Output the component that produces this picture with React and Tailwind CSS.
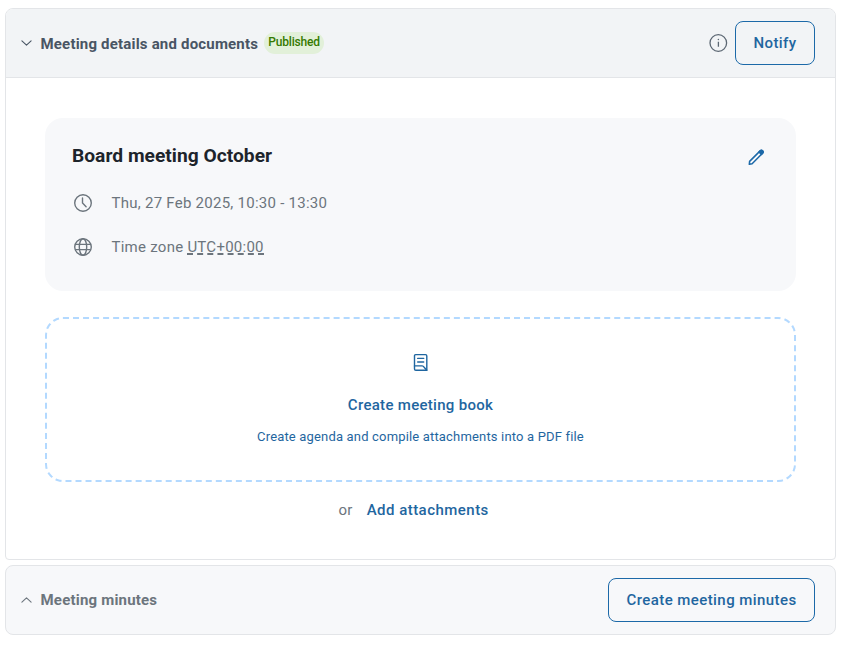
import React from "react";

function Chevron({ up = false }) {
  return (
    <svg className="h-3 w-3 shrink-0" viewBox="0 0 12 12" fill="none" stroke="currentColor" strokeWidth="1.1" strokeLinecap="round" strokeLinejoin="round">
      <path d={up ? "M1.9 8.2 6.5 3.8l4.6 4.4" : "M1.9 3.8 6.5 8.2l4.6-4.4"} />
    </svg>
  );
}

function InfoIcon() {
  return (
    <svg className="h-5 w-5" viewBox="0 0 20 20" fill="none" stroke="currentColor" strokeWidth="1.3">
      <circle cx="10.3" cy="10" r="8.3" />
      <path d="M10.4 8.8v5" />
      <circle cx="10.4" cy="6.6" r="0.75" fill="currentColor" stroke="none" />
    </svg>
  );
}

function ClockIcon() {
  return (
    <svg className="h-5 w-5" viewBox="0 0 20 20" fill="none" stroke="currentColor" strokeWidth="1.4" strokeLinecap="round">
      <circle cx="10" cy="10" r="8.3" />
      <path d="M9.5 5v5l3.6 3.8" />
    </svg>
  );
}

function GlobeIcon() {
  return (
    <svg className="h-5 w-5" viewBox="0 0 20 20" fill="none" stroke="currentColor" strokeWidth="1.4">
      <circle cx="10" cy="10" r="8.3" />
      <ellipse cx="10" cy="10" rx="3.7" ry="8.3" />
      <path d="M2.3 7.4h15.4M2.3 12.6h15.4" />
    </svg>
  );
}

function PencilIcon() {
  return (
    <svg className="h-5 w-5" viewBox="0 0 20 20" fill="none" stroke="currentColor" strokeWidth="1.5" strokeLinejoin="round">
      <path d="M3.3 17.3 3.6 14.4 14.1 3.9a1.7 1.7 0 0 1 2.4 2.4L6.1 16.8z" />
      <path d="m13 5 1.3-1.3a1.7 1.7 0 0 1 2.4 2.4l-1.3 1.3z" fill="currentColor" />
    </svg>
  );
}

function BookIcon() {
  return (
    <svg className="h-5 w-5" viewBox="0 0 20 20" fill="none" stroke="currentColor" strokeWidth="1.4" strokeLinejoin="round" strokeLinecap="round">
      <path d="M4.6 2.6h9.9a1.3 1.3 0 0 1 1.3 1.3v14.4h-11A1.3 1.3 0 0 1 3.5 17V3.7a1.1 1.1 0 0 1 1.1-1.1z" />
      <path d="M3.5 13.9h7.6c1.2 0 1.6.6 2 1.4l2.7 3M6.7 6.4h6M6.7 10h6" />
    </svg>
  );
}

function OutlineButton({ children, className }) {
  return (
    <button className={`h-11 rounded-lg border border-[#1c69a8] text-[15px] font-medium text-[#1f66a0] ${className}`}>
      {children}
    </button>
  );
}

export default function App() {
  return (
    <main className="flex h-[649px] w-[845px] flex-col gap-[5px] bg-white pt-2 pl-[5px] font-['Roboto',sans-serif] text-[15px] tracking-[0.26px] text-[#6c757d]">
      <section className="h-[552px] w-[831px] overflow-hidden rounded-lg rounded-b-[4px] border border-[#e3e5e8] bg-white">
        <header className="flex h-[69px] items-center border-b border-[#e3e5e8] bg-[#f2f4f6] pr-5 pl-[14px] text-[#495564]">
          <Chevron />
          <h2 className="ml-[8.5px] pt-[2px] text-[15px] font-bold tracking-[0.19px]">Meeting details and documents</h2>
          <span className="ml-[6px] flex h-[22px] w-[60px] items-start justify-center rounded-full bg-[#e2f0d9] pt-[2px] text-[12px] leading-4 font-medium tracking-[-0.18px] text-[#357a00]">Published</span>
          <span className="mr-[7px] ml-auto text-[#5c6773]"><InfoIcon /></span>
          <OutlineButton className="w-20 tracking-[0.4px]">Notify</OutlineButton>
        </header>

        <div className="px-[39px] pt-10">
          <article className="h-[173px] rounded-[18px] bg-[#f7f8fa] pt-[25px] pr-[30px] pl-[27px]">
            <div className="flex h-6 items-center justify-between">
              <h1 className="pt-[2px] text-[19.2px] font-bold tracking-[0.02px] text-[#1d242b]">Board meeting October</h1>
              <button className="mt-1 text-[#1c69a8]"><PencilIcon /></button>
            </div>
            <div className="mt-[26px] flex h-5 items-center gap-[18.5px] pl-[1px]">
              <ClockIcon />
              <span>Thu, 27 Feb 2025, 10:30 - 13:30</span>
            </div>
            <div className="mt-6 flex h-5 items-center gap-[18.5px] pl-[1px]">
              <GlobeIcon />
              <span className="flex h-5 items-start leading-5">
                <span className="whitespace-pre">Time zone </span>
                <span className="h-[18px] border-b-2 border-dashed border-[#6c757d]">UTC+00:00</span>
              </span>
            </div>
          </article>

          <button className="mt-[26px] flex h-[165px] w-full flex-col items-center rounded-[18px] border-2 border-dashed border-[#b3d9ff] pt-[33px] text-[#1f66a0]">
            <BookIcon />
            <span className="mt-[23px] text-[15px] leading-5 font-medium tracking-[0.3px]">Create meeting book</span>
            <span className="mt-3 text-[13px] leading-5 tracking-[0.17px]">Create agenda and compile attachments into a PDF file</span>
          </button>

          <div className="mt-[18px] flex h-5 items-center pl-[293.5px]">
            <span>or</span>
            <button className="ml-[14px] font-medium tracking-[0.47px] text-[#1f66a0]">Add attachments</button>
          </div>
        </div>
      </section>

      <section className="flex h-[70px] w-[831px] items-center rounded-lg border border-[#e3e5e8] bg-[#f7f8fa] pr-5 pl-[14px]">
        <Chevron up />
        <h2 className="ml-[8.5px] text-[15px] font-bold tracking-[0.2px]">Meeting minutes</h2>
        <OutlineButton className="ml-auto w-[207px] tracking-[0.43px]">Create meeting minutes</OutlineButton>
      </section>
    </main>
  );
}
